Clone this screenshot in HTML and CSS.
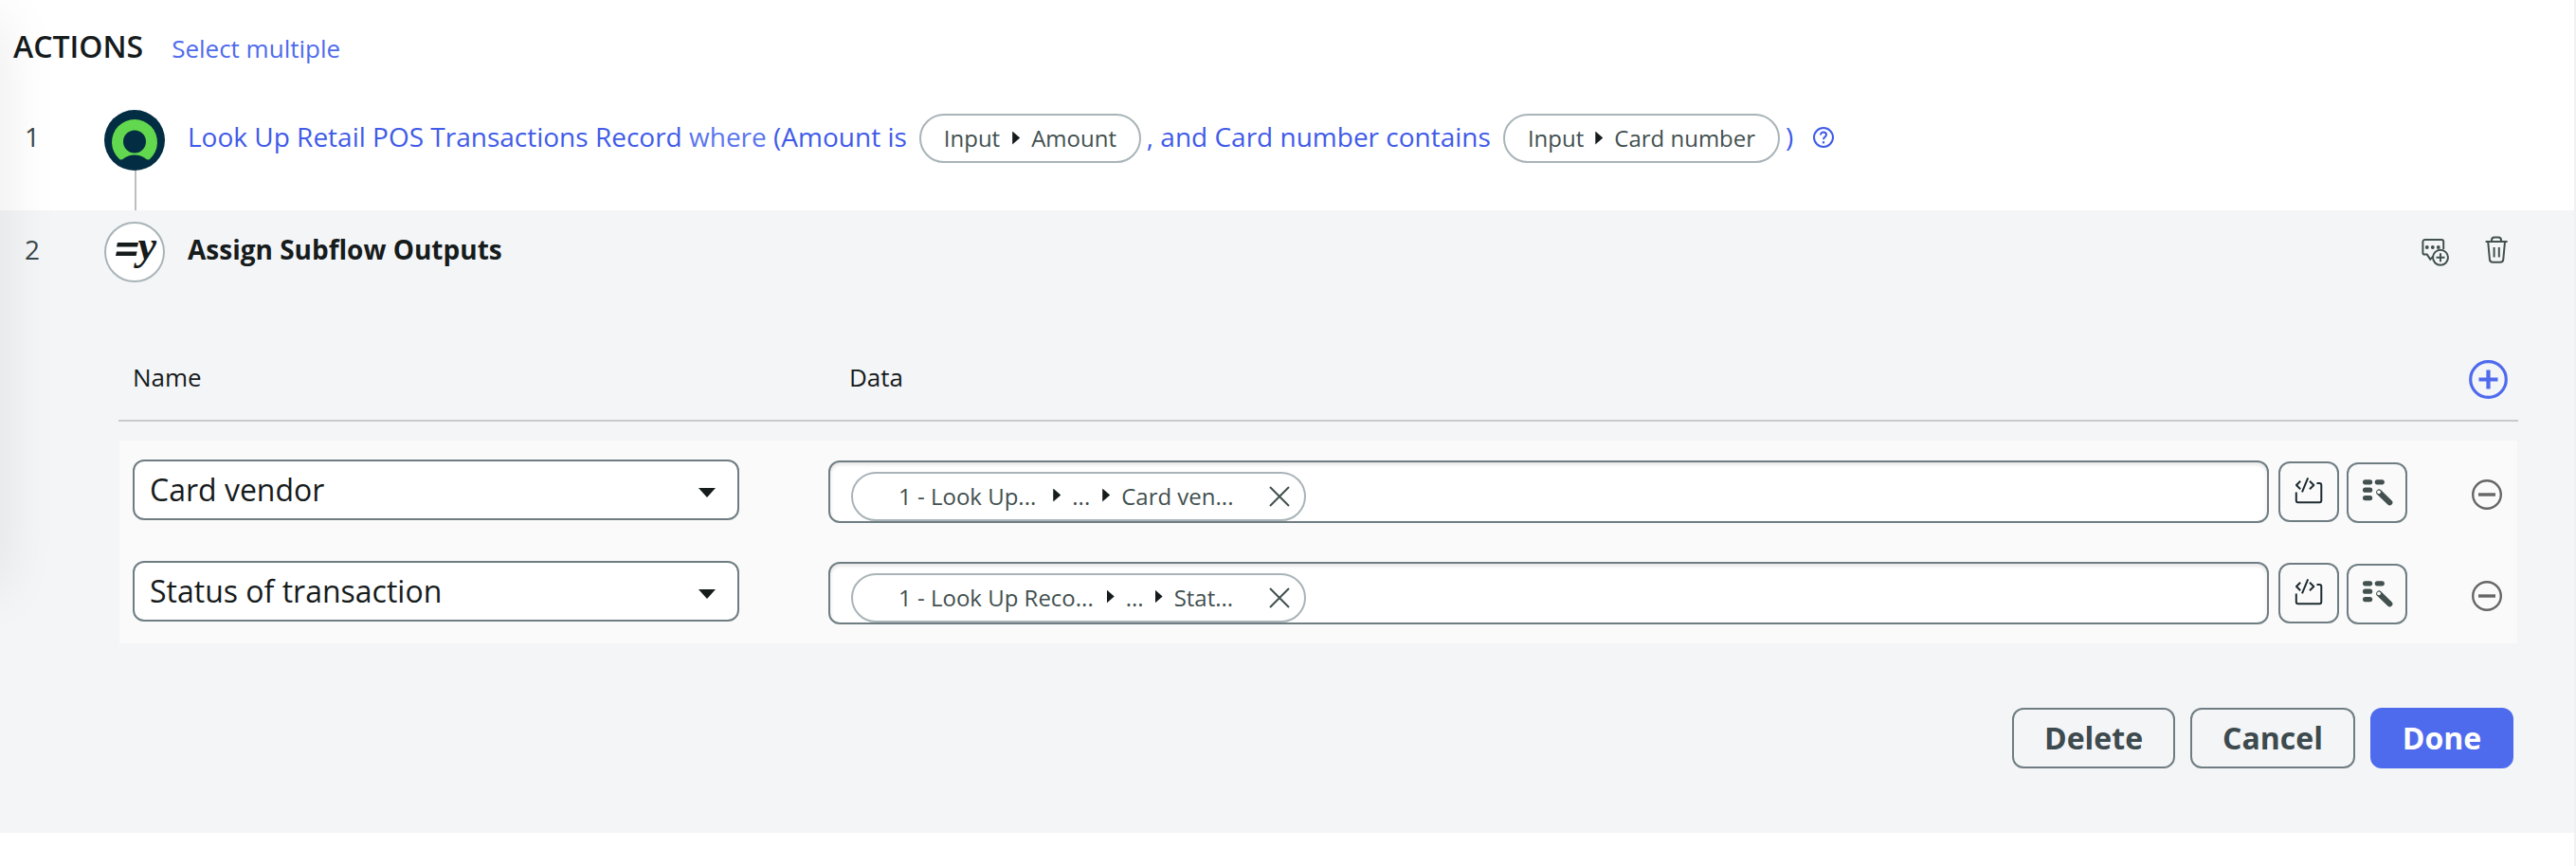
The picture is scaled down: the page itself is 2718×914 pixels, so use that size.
FILE: index.html
```html
<!DOCTYPE html>
<html lang="en">
<head>
<meta charset="utf-8">
<title>Actions</title>
<link rel="stylesheet" href="styles.css">
</head>
<body>
<svg class="defs" width="0" height="0" aria-hidden="true">
  <symbol id="code" viewBox="0 0 60 60">
    <g fill="none" stroke="#1d2b30" stroke-width="2" stroke-linejoin="round">
      <path d="M16.8 30.5V39.3a2 2 0 0 0 2 2H41.3a2 2 0 0 0 2-2V23a2 2 0 0 0-2-2H38.5"/>
      <path d="M21.2 18.7L17 23L21.2 27.3M29.2 15.3L23 30.3M31 18.7L35.3 23L31 27.3"/>
    </g>
  </symbol>
  <symbol id="wand" viewBox="0 0 60 60">
    <g fill="#42504f">
      <rect x="15" y="16.2" width="10.2" height="5.2" rx="2.6"/>
      <rect x="27.7" y="16.2" width="10.2" height="5.2" rx="2.6"/>
      <rect x="15" y="24.6" width="10.2" height="5.2" rx="2.6"/>
      <rect x="15" y="33" width="10.2" height="5.2" rx="2.6"/>
    </g>
    <path d="M32.2 29.5L43.4 40.4" stroke="#42504f" stroke-width="6" stroke-linecap="round"/>
    <circle cx="32" cy="29.3" r="1.9" fill="#fafafa"/>
  </symbol>
  <symbol id="minus" viewBox="0 0 32 32">
    <circle cx="16" cy="16" r="14.8" fill="none" stroke="#666" stroke-width="2.4"/>
    <path d="M7 16H25" stroke="#666" stroke-width="3.4"/>
  </symbol>
  <symbol id="close" viewBox="0 0 22 22">
    <path d="M1 1L21 21M21 1L1 21" stroke="#42504f" stroke-width="2"/>
  </symbol>
</svg>

<main class="flow">
  <div class="edge-shadow"></div>
  <header class="head">
    <h1 class="head-title">ACTIONS</h1>
    <a class="head-link">Select multiple</a>
  </header>

  <section class="step">
    <div class="step-no">1</div>
    <div class="step-rail">
      <svg class="step-icon" viewBox="0 0 64 64">
        <circle cx="32" cy="32" r="32" fill="#032d42"/>
        <path d="M16 51.9A24 24 0 1 1 48 51.9C46.5 53 45 52.8 43.8 51.6A19 19 0 0 0 20.2 51.6C19 52.8 17.5 53 16 51.9Z" fill="#62d84e"/>
        <circle cx="32" cy="33.4" r="12" fill="#032d42"/>
      </svg>
      <div class="rail-line"></div>
    </div>
    <div class="summary">
      <span class="phrase">Look Up Retail POS Transactions Record <span class="soft">where</span> (Amount is</span>
      <span class="pill pill-amount"><span>Input</span><i class="arrow"></i><span>Amount</span></span>
      <span class="phrase">, and Card number contains</span>
      <span class="pill pill-card"><span>Input</span><i class="arrow"></i><span>Card number</span></span>
      <span class="phrase">)</span>
      <svg class="help" viewBox="0 0 22 22">
        <circle cx="11" cy="11" r="10" fill="none" stroke="#3f5be8" stroke-width="2"/>
        <path d="M8 8.4C8 6.6 9.3 5.6 11 5.6S14 6.7 14 8.2C14 10.4 11 10.4 11 13.2" fill="none" stroke="#3f5be8" stroke-width="2"/>
        <rect x="9.9" y="15.2" width="2.2" height="2.2" fill="#3f5be8"/>
      </svg>
    </div>
  </section>

  <section class="editor">
    <div class="editor-head">
      <div class="step-no">2</div>
      <svg class="step-icon" viewBox="0 0 64 64">
        <circle cx="32" cy="32" r="31" fill="#fff" stroke="#a9b4b8" stroke-width="2"/>
        <path d="M14 22H36L35 26.6H13ZM13 31.6H34.6L33.6 36H12Z" fill="#161b1c"/>
        <text class="glyph" x="35.5" y="40">y</text>
      </svg>
      <h2 class="editor-title">Assign Subflow Outputs</h2>
      <div class="tools">
        <svg class="tool-comment" viewBox="0 0 36 36" fill="none" stroke="#42504f" stroke-width="2">
          <path d="M17 19L12.2 23.6L8.8 18.6H6.6A2.2 2.2 0 0 1 4.4 16.4V5.2A2.2 2.2 0 0 1 6.6 3H24A2.2 2.2 0 0 1 26.2 5.2V13"/>
          <g fill="#42504f" stroke="none"><circle cx="8.8" cy="11" r="1.9"/><circle cx="14.8" cy="11" r="1.9"/><circle cx="20.8" cy="11" r="1.9"/></g>
          <circle cx="23" cy="21.8" r="8" fill="#f4f5f7"/>
          <path d="M23 17.3V26.3M18.5 21.8H27.5"/>
        </svg>
        <svg class="tool-trash" viewBox="0 0 28 30" fill="none" stroke="#42504f" stroke-width="2">
          <path d="M2.6 6H25.6M9 5.6V4.4A3 3 0 0 1 12 1.4H16A3 3 0 0 1 19 4.4V5.6M5.2 6L6.9 24.6A3.4 3.4 0 0 0 10.2 27.8H18A3.4 3.4 0 0 0 21.3 24.6L23 6M11.6 12V22.6M16.8 12V22.6"/>
        </svg>
      </div>
    </div>

    <div class="table-head">
      <span class="col-name">Name</span>
      <span class="col-data">Data</span>
      <svg class="add" viewBox="0 0 41 41" fill="none" stroke="#4f6bed">
        <circle cx="20.5" cy="20.5" r="18.8" stroke-width="3.2"/>
        <path d="M20.5 10.5V30.5M10.5 20.5H30.5" stroke-width="4.2"/>
      </svg>
    </div>

    <div class="table-body">
      <div class="row">
        <div class="select"><span>Card vendor</span><i class="caret"></i></div>
        <div class="field">
          <div class="token">
            <span>1 - Look Up...</span><i class="arrow"></i><span>...</span><i class="arrow"></i><span>Card ven...</span>
            <svg class="close"><use href="#close"/></svg>
          </div>
        </div>
        <button class="square square-code"><svg class="sq-icon"><use href="#code"/></svg></button>
        <button class="square square-wand"><svg class="sq-icon"><use href="#wand"/></svg></button>
        <svg class="remove"><use href="#minus"/></svg>
      </div>
      <div class="row">
        <div class="select"><span>Status of transaction</span><i class="caret"></i></div>
        <div class="field">
          <div class="token token-tight">
            <span>1 - Look Up Reco...</span><i class="arrow"></i><span>...</span><i class="arrow"></i><span>Stat...</span>
            <svg class="close"><use href="#close"/></svg>
          </div>
        </div>
        <button class="square square-code"><svg class="sq-icon"><use href="#code"/></svg></button>
        <button class="square square-wand"><svg class="sq-icon"><use href="#wand"/></svg></button>
        <svg class="remove"><use href="#minus"/></svg>
      </div>
    </div>

    <footer class="buttons">
      <button class="btn btn-delete">Delete</button>
      <button class="btn btn-cancel">Cancel</button>
      <button class="btn btn-done">Done</button>
    </footer>
  </section>
</main>
</body>
</html>
```
FILE: styles.css
```css
* { box-sizing: border-box; }
body {
  margin: 0;
  background: #fff;
  color: #161b1c;
  font-family: "Open Sans", "Noto Sans", sans-serif;
}
h1, h2 { margin: 0; }
svg { display: block; flex: none; }
.defs { position: absolute; }
.flow {
  position: relative;
  height: 914px;
  overflow: hidden;
  border-right: 2px solid #f0f1f3;
}
.edge-shadow {
  position: absolute;
  left: -40px;
  top: 20px;
  width: 40px;
  height: 600px;
  box-shadow: 0 0 60px rgba(0, 0, 0, .1);
  z-index: 1;
}

.head {
  display: flex;
  align-items: baseline;
  gap: 30px;
  height: 71px;
  padding: 27px 0 0 14px;
}
.head-title { font-size: 32px; line-height: 44px; font-weight: 600; }
.head-link { font-size: 26px; color: #4f6bed; }

.step { display: flex; height: 151px; padding: 45px 0 0 26px; }
.step-no {
  width: 84px;
  flex: none;
  font-size: 28px;
  line-height: 56px;
  color: #3a4649;
}
.step-rail { width: 64px; display: flex; flex-direction: column; }
.step-icon { width: 64px; height: 64px; overflow: visible; }
.rail-line { width: 2px; flex: 1; margin-left: 32px; background: #bcbec3; }
.summary {
  display: flex;
  align-items: center;
  height: 56px;
  margin-left: 24px;
  font-size: 28px;
  color: #3f5be8;
  white-space: nowrap;
}
.soft { color: #5b76ee; }
.pill {
  display: flex;
  align-items: center;
  height: 52px;
  margin: 4px 6px 0 13px;
  padding: 0 0 1px 24px;
  border: 2px solid #a9b4b8;
  border-radius: 26px;
  font-size: 24px;
  color: #42504f;
}
.pill-amount { width: 234px; }
.pill-card { width: 292px; }
.arrow {
  width: 8px;
  height: 14px;
  margin: 0 12px;
  background: #161b1c;
  clip-path: polygon(0 0, 100% 50%, 0 100%);
}
.pill-amount .arrow { margin-left: 13px; }
.help { width: 22px; height: 22px; margin: 2px 0 0 21px; }

.editor { height: 657px; padding-top: 12px; background: #f4f5f7; }
.editor-head { display: flex; height: 64px; padding-left: 26px; }
.editor-head .step-no { line-height: 58px; }
.glyph { font: italic bold 44px "Liberation Serif", serif; fill: #161b1c; }
.editor-title { margin-left: 24px; font-size: 28px; line-height: 58px; font-weight: 700; }
.tools { display: flex; gap: 32px; margin: 15px 68px 0 auto; }
.tool-comment { width: 36px; height: 36px; margin-top: 1px; }
.tool-trash { width: 28px; height: 30px; }

.table-head {
  display: flex;
  align-items: center;
  height: 89px;
  margin: 58px 59px 0 125px;
  padding: 0 11px 0 15px;
  border-bottom: 2px solid #c8cacd;
  font-size: 26px;
}
.table-head span { padding-bottom: 3px; }
.col-name { width: 756px; }
.add { width: 41px; height: 41px; margin: 2px 0 0 auto; }

.table-body { margin: 20px 60px 0 126px; background: #fafafa; }
.row { display: flex; align-items: flex-start; height: 107px; padding: 20px 0 0 14px; }
.select {
  display: flex;
  align-items: center;
  justify-content: space-between;
  width: 640px;
  height: 64px;
  padding: 0 23px 1px 16px;
  border: 2px solid #6f7d83;
  border-radius: 12px;
  background: #fff;
  font-size: 32px;
}
.caret {
  width: 18px;
  height: 10px;
  margin-top: 7px;
  background: #161b1c;
  clip-path: polygon(0 0, 100% 0, 50% 100%);
}
.field {
  width: 1520px;
  height: 66px;
  margin: 1px 10px 0 94px;
  padding: 10px 22px 0;
  border: 2px solid #6f7d83;
  border-radius: 12px;
  background: #fff;
  box-shadow: inset 0 2px 4px rgba(0, 0, 0, .12);
}
.token {
  display: flex;
  align-items: center;
  width: 480px;
  height: 52px;
  padding: 0 15px 1px 48px;
  border: 2px solid #a9b4b8;
  border-radius: 26px;
  background: #fff;
  font-size: 24px;
  color: #42504f;
  white-space: nowrap;
}
.token .arrow { margin: -2px 12px 0 18px; }
.token .arrow ~ .arrow { margin-left: 13px; }
.token-tight .arrow { margin-left: 14px; }
.token-tight .arrow ~ .arrow { margin-left: 12px; }
.close { width: 22px; height: 22px; margin-left: auto; }
.square {
  width: 64px;
  height: 64px;
  padding: 0;
  border: 2px solid #6f7d83;
  border-radius: 12px;
  background: #fafafa;
}
.square-code { margin: 2px 8px 0 0; }
.square-wand { margin: 3px 68px 0 0; }
.sq-icon { width: 60px; height: 60px; }
.remove { width: 32px; height: 32px; margin-top: 21px; }

.buttons { display: flex; justify-content: flex-end; gap: 16px; padding: 68px 64px 0 0; }
.btn {
  height: 64px;
  padding: 0 0 1px;
  border: 2px solid #6f7d83;
  border-radius: 12px;
  background: transparent;
  font: 700 32px "Open Sans", "Noto Sans", sans-serif;
  color: #3d4a4e;
}
.btn-delete { width: 172px; }
.btn-cancel { width: 174px; }
.btn-done { width: 151px; border-color: #4f6bed; background: #4f6bed; color: #fff; }
```
